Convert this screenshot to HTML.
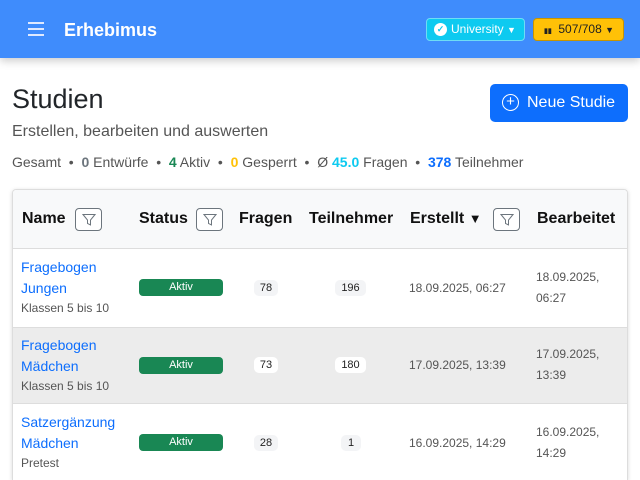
<!DOCTYPE html>
<html><head><meta charset="utf-8"><style>
*{box-sizing:border-box;margin:0;padding:0}
html,body{width:640px;height:480px;overflow:hidden}
body{background:#fff;font-family:"Liberation Sans",sans-serif;color:#212529;position:relative}
.a{position:absolute;white-space:nowrap}
.nav{position:absolute;left:0;top:0;width:640px;height:58px;background:#3f8cfc;box-shadow:0 3px 8px rgba(0,0,0,.2)}
.filt{position:absolute;width:27px;height:23px;border:1px solid #6c757d;border-radius:4px;background:#fff}
.filt svg{position:absolute;left:6px;top:4px}
.th{font-weight:bold;font-size:16px;color:#111}
.badge{position:absolute;background:#198754;color:#fff;font-size:11px;border-radius:4px;width:84px;height:17px;text-align:center;line-height:17px}
.pill{position:absolute;background:#f3f4f6;font-size:11px;border-radius:5px;height:16px;line-height:16px;text-align:center;color:#222}
.lnk{color:#0d6efd;font-size:14px;line-height:21px}
.sub{font-size:12px;color:#555}
.dt{font-size:12px;color:#555}
</style></head><body>
<div class="nav">
 <div class="a" style="left:28px;top:22px;width:16px;height:1.5px;background:#dfe9ff;box-shadow:0 6px 0 #dfe9ff,0 12px 0 #dfe9ff"></div>
 <div class="a" style="left:64px;top:20px;font-size:18px;font-weight:bold;color:#fff">Erhebimus</div>
 <div class="a" style="left:426px;top:18px;width:99px;height:23px;background:#0dcaf0;border:1px solid #6fdcf5;border-radius:4px;color:#fff;font-size:12px;line-height:21px;padding-left:24px">University <span style="font-size:9px">▼</span>
  <div class="a" style="left:7px;top:4px;width:13px;height:13px;border-radius:50%;background:#fff;color:#0dcaf0;font-size:9px;line-height:13px;text-align:center;font-weight:bold">✓</div></div>
 <div class="a" style="left:533px;top:18px;width:91px;height:23px;background:#ffc107;border:1px solid #c79400;border-radius:4px;color:#222;font-size:12px;line-height:21px;padding-left:10px"><span style="font-size:7px;font-weight:bold">▮▮</span>&nbsp; 507/708 <span style="font-size:9px">▼</span></div>
</div>
<div class="a" style="left:12px;top:84px;font-size:27px">Studien</div>
<div class="a" style="left:12px;top:123px;font-size:16px;color:#555">Erstellen, bearbeiten und auswerten</div>
<div class="a" style="left:490px;top:84px;width:138px;height:38px;background:#0d6efd;border-radius:5px;color:#fff;font-size:16px;line-height:38px;padding-left:37px">Neue Studie
 <div class="a" style="left:12px;top:10px;width:17px;height:17px;border:1.5px solid #fff;border-radius:50%;line-height:13px;text-align:center;font-size:15px">+</div></div>
<div class="a" style="left:12px;top:154px;font-size:14px;color:#555">Gesamt &nbsp;•&nbsp; <b style="color:#6c757d">0</b> Entwürfe &nbsp;•&nbsp; <b style="color:#198754">4</b> Aktiv &nbsp;•&nbsp; <b style="color:#ffc107">0</b> Gesperrt &nbsp;•&nbsp; Ø <b style="color:#0dcaf0">45.0</b> Fragen &nbsp;•&nbsp; <b style="color:#0d6efd">378</b> Teilnehmer</div>

<div class="a" style="left:12px;top:189px;width:616px;height:291px;border:1px solid #ddd;border-bottom:none;border-radius:4px 4px 0 0;box-shadow:0 1px 4px rgba(0,0,0,.15);overflow:hidden">
 <div class="a" style="left:0;top:0;width:616px;height:59px;background:#f8f9fa;border-bottom:1px solid #ddd"></div>
 <div class="a" style="left:0;top:137px;width:616px;height:77px;background:#ececec;border-top:1px solid #ddd;border-bottom:1px solid #ddd"></div>
</div>
<div class="a th" style="left:22px;top:210px">Name</div>
<div class="filt" style="left:75px;top:208px"><svg width="14" height="14" viewBox="0 0 14 14"><path d="M1 1.5h12L8.5 7v5L5.5 10.5V7z" fill="none" stroke="#6c757d" stroke-width="1"/></svg></div>
<div class="a th" style="left:139px;top:210px">Status</div>
<div class="filt" style="left:196px;top:208px"><svg width="14" height="14" viewBox="0 0 14 14"><path d="M1 1.5h12L8.5 7v5L5.5 10.5V7z" fill="none" stroke="#6c757d" stroke-width="1"/></svg></div>
<div class="a th" style="left:239px;top:210px">Fragen</div>
<div class="a th" style="left:309px;top:210px">Teilnehmer</div>
<div class="a th" style="left:410px;top:210px">Erstellt <span style="font-size:13px">▼</span></div>
<div class="filt" style="left:493px;top:208px"><svg width="14" height="14" viewBox="0 0 14 14"><path d="M1 1.5h12L8.5 7v5L5.5 10.5V7z" fill="none" stroke="#6c757d" stroke-width="1"/></svg></div>
<div class="a th" style="left:537px;top:210px">Bearbeitet</div>

<div class="a lnk" style="left:21px;top:257px">Fragebogen<br>Jungen</div>
<div class="a sub" style="left:21px;top:301px">Klassen 5 bis 10</div>
<div class="badge" style="left:139px;top:279px;line-height:16px">Aktiv</div>
<div class="pill" style="left:254px;top:280px;width:24px">78</div>
<div class="pill" style="left:335px;top:280px;width:31px">196</div>
<div class="a dt" style="left:409px;top:281px">18.09.2025, 06:27</div>
<div class="a dt" style="left:536px;top:267px;line-height:21px">18.09.2025,<br>06:27</div>

<div class="a lnk" style="left:21px;top:335px">Fragebogen<br>Mädchen</div>
<div class="a sub" style="left:21px;top:379px">Klassen 5 bis 10</div>
<div class="badge" style="left:139px;top:357px;line-height:16px">Aktiv</div>
<div class="pill" style="left:254px;top:357px;width:24px;background:#fff">73</div>
<div class="pill" style="left:335px;top:357px;width:31px;background:#fff">180</div>
<div class="a dt" style="left:409px;top:358px">17.09.2025, 13:39</div>
<div class="a dt" style="left:536px;top:344px;line-height:21px">17.09.2025,<br>13:39</div>

<div class="a lnk" style="left:21px;top:412px">Satzergänzung<br>Mädchen</div>
<div class="a sub" style="left:21px;top:456px">Pretest</div>
<div class="badge" style="left:139px;top:434px;line-height:16px">Aktiv</div>
<div class="pill" style="left:254px;top:435px;width:24px">28</div>
<div class="pill" style="left:341px;top:435px;width:20px">1</div>
<div class="a dt" style="left:409px;top:436px">16.09.2025, 14:29</div>
<div class="a dt" style="left:536px;top:422px;line-height:21px">16.09.2025,<br>14:29</div>
</body></html>
